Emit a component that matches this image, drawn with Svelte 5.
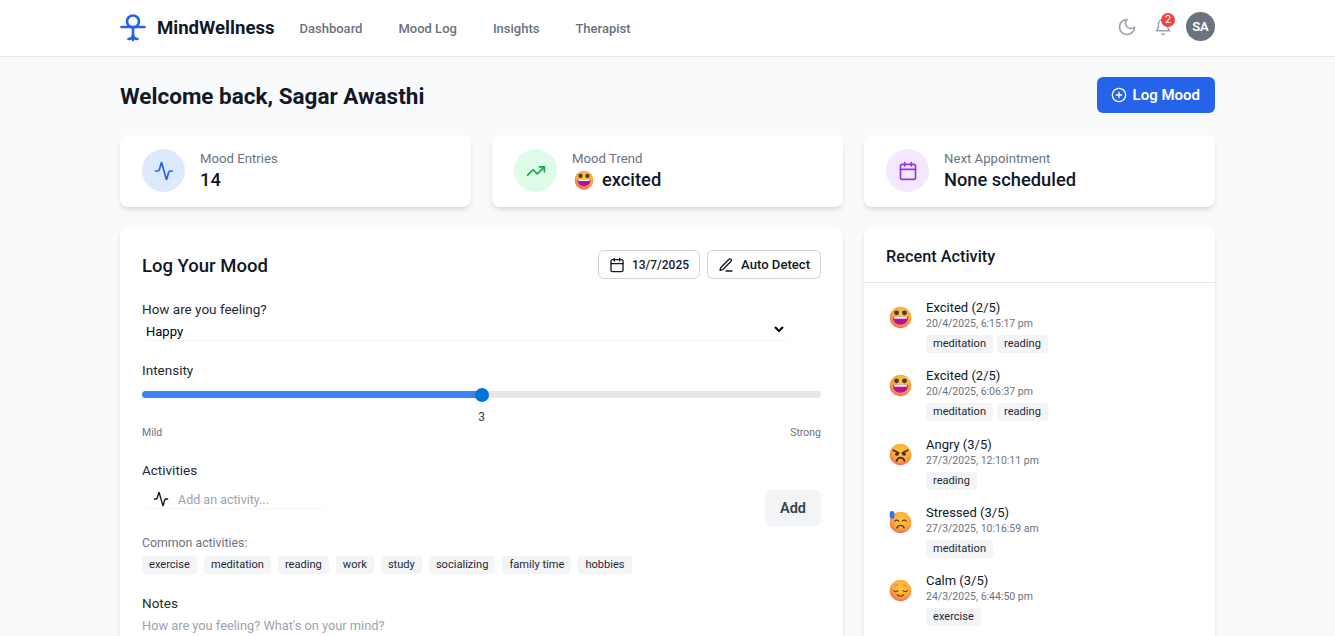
<script lang="ts">
	const navLinks = ['Dashboard', 'Mood Log', 'Insights', 'Therapist'];
	const commonActivities = ['exercise', 'meditation', 'reading', 'work', 'study', 'socializing', 'family time', 'hobbies'];
	const recent = [
		{ mood: 'excited', label: 'Excited (2/5)', time: '20/4/2025, 6:15:17 pm', tags: ['meditation', 'reading'] },
		{ mood: 'excited', label: 'Excited (2/5)', time: '20/4/2025, 6:06:37 pm', tags: ['meditation', 'reading'] },
		{ mood: 'angry', label: 'Angry (3/5)', time: '27/3/2025, 12:10:11 pm', tags: ['reading'] },
		{ mood: 'stressed', label: 'Stressed (3/5)', time: '27/3/2025, 10:16:59 am', tags: ['meditation'] },
		{ mood: 'calm', label: 'Calm (3/5)', time: '24/3/2025, 6:44:50 pm', tags: ['exercise'] }
	];
</script>

{#snippet face(mood: string, size: number)}
	<svg class="emoji" width={size} height={size} viewBox="0 0 32 32" aria-hidden="true">
		<defs>
			<radialGradient id="face-{mood}" cx="0.55" cy="0.36" r="0.72">
				<stop offset="0" stop-color="#ffc83a" />
				<stop offset="0.58" stop-color="#fba83a" />
				<stop offset="0.82" stop-color="#f6794f" />
				<stop offset="1" stop-color="#e95a8a" />
			</radialGradient>
		</defs>
		<circle cx="16" cy="16" r="15" fill="url(#face-{mood})" />
		{#if mood === 'excited'}
			<circle cx="10.500" cy="9.500" r="3.400" fill="#4a3a3f" />
			<circle cx="21.500" cy="9.500" r="3.400" fill="#4a3a3f" />
			<path d="M6.500 15h19c.6 0 1 .4 1 1 0 6-4.500 10-10.500 10S5.500 22 5.500 16c0-.6.4-1 1-1z" fill="#b8129c" />
			<path d="M7 15h18v2.600H7z" fill="#fff" />
		{:else if mood === 'angry'}
			<path d="M6 10l7.500 4M26 10l-7.500 4" stroke="#4a2a2a" stroke-width="2.400" stroke-linecap="round" fill="none" />
			<circle cx="11" cy="15.500" r="2.400" fill="#4a2a2a" />
			<circle cx="21" cy="15.500" r="2.400" fill="#4a2a2a" />
			<path d="M10.500 25c1-3.500 3.500-4.500 5.500-4.500s4.500 1 5.500 4.500" stroke="#4a2a2a" stroke-width="2.400" stroke-linecap="round" fill="none" />
		{:else if mood === 'stressed'}
			<path d="M8 14c1.500-1.800 4-1.800 5.500 0M18.500 14c1.500-1.800 4-1.800 5.500 0" stroke="#5a3a30" stroke-width="1.800" stroke-linecap="round" fill="none" />
			<path d="M11 23.500c1-2.500 3-3.500 5-3.500s4 1 5 3.500" stroke="#5a3a30" stroke-width="2" stroke-linecap="round" fill="none" />
			<rect x="1" y="0" width="6.500" height="11" rx="3.200" fill="#3f6fe0" />
		{:else}
			<path d="M6.500 16c1.500 2 4.500 2 6 0M19.500 16c1.500 2 4.500 2 6 0" stroke="#5a3a30" stroke-width="1.600" stroke-linecap="round" fill="none" />
			<path d="M7.500 10c1.500-1.500 3-1.800 4.500-1.500M24.500 10c-1.500-1.500-3-1.800-4.500-1.500" stroke="#c9803a" stroke-width="1.300" stroke-linecap="round" fill="none" />
			<path d="M11.500 22c2.500 2.400 6.500 2.400 9 0" stroke="#5a3a30" stroke-width="1.800" stroke-linecap="round" fill="none" />
		{/if}
	</svg>
{/snippet}

{#snippet calendarIcon(size: number)}
	<svg width={size} height={size} viewBox="0 0 24 24" fill="none" stroke="currentColor" stroke-width="2" stroke-linecap="round" stroke-linejoin="round" aria-hidden="true">
		<path d="M8 2v4M16 2v4" />
		<rect x="3" y="4" width="18" height="18" rx="2" />
		<path d="M3 10h18" />
	</svg>
{/snippet}

{#snippet activityIcon(size: number)}
	<svg width={size} height={size} viewBox="0 0 24 24" fill="none" stroke="currentColor" stroke-width="2" stroke-linecap="round" stroke-linejoin="round" aria-hidden="true">
		<path d="M22 12h-2.480a2 2 0 0 0-1.930 1.460l-2.350 8.360a.25.25 0 0 1-.48 0L9.240 2.180a.25.25 0 0 0-.48 0l-2.350 8.360A2 2 0 0 1 4.490 12H2" />
	</svg>
{/snippet}

<div class="page">
	<header class="topbar">
		<div class="topbar__left">
			<div class="brand">
				<svg class="brand__mark" width="26" height="28" viewBox="0 0 26 28" fill="none" stroke="#2563eb" stroke-width="2.600" stroke-linecap="round" aria-hidden="true">
					<circle cx="13" cy="7.500" r="6" />
					<path d="M1.500 13h23M13 14v7" />
					<path d="M8.500 25c2.500 0 4-1.500 4.500-4 .5 2.500 2 4 4.500 4M13 21v5" />
				</svg>
				<span class="brand__name">MindWellness</span>
			</div>
			<nav class="nav">
				{#each navLinks as link}
					<a class="nav__link" href="#top">{link}</a>
				{/each}
			</nav>
		</div>
		<div class="topbar__right">
			<svg class="moon" width="20" height="20" viewBox="0 0 24 24" fill="none" stroke="currentColor" stroke-width="2" stroke-linecap="round" stroke-linejoin="round" aria-hidden="true">
				<path d="M12 3a6 6 0 0 0 9 9 9 9 0 1 1-9-9Z" />
			</svg>
			<div class="bell">
				<svg width="18" height="18" viewBox="0 0 24 24" fill="none" stroke="currentColor" stroke-width="2" stroke-linecap="round" stroke-linejoin="round" aria-hidden="true">
					<path d="M6 8a6 6 0 0 1 12 0c0 7 3 9 3 9H3s3-2 3-9" />
					<path d="M10.300 21a1.940 1.940 0 0 0 3.400 0" />
				</svg>
				<span class="bell__badge">2</span>
			</div>
			<div class="avatar">SA</div>
		</div>
	</header>

	<main class="main">
		<div class="welcome">
			<h1 class="welcome__title">Welcome back, Sagar Awasthi</h1>
			<button type="button" class="log-btn">
				<svg width="16" height="16" viewBox="0 0 24 24" fill="none" stroke="currentColor" stroke-width="2" stroke-linecap="round" stroke-linejoin="round" aria-hidden="true">
					<circle cx="12" cy="12" r="10" />
					<path d="M8 12h8M12 8v8" />
				</svg>
				Log Mood
			</button>
		</div>

		<section class="stats">
			<div class="stat card">
				<div class="stat__icon stat__icon--blue">{@render activityIcon(20)}</div>
				<div>
					<p class="stat__label">Mood Entries</p>
					<p class="stat__value">14</p>
				</div>
			</div>
			<div class="stat card">
				<div class="stat__icon stat__icon--green">
					<svg width="20" height="20" viewBox="0 0 24 24" fill="none" stroke="currentColor" stroke-width="2" stroke-linecap="round" stroke-linejoin="round" aria-hidden="true">
						<path d="M22 7l-8.500 8.500-5-5L2 17" />
						<path d="M16 7h6v6" />
					</svg>
				</div>
				<div>
					<p class="stat__label">Mood Trend</p>
					<p class="stat__value stat__value--mood">{@render face('excited', 20)} excited</p>
				</div>
			</div>
			<div class="stat card">
				<div class="stat__icon stat__icon--purple">{@render calendarIcon(20)}</div>
				<div>
					<p class="stat__label">Next Appointment</p>
					<p class="stat__value">None scheduled</p>
				</div>
			</div>
		</section>

		<section class="columns">
			<div class="log card">
				<div class="log__head">
					<h2 class="log__title">Log Your Mood</h2>
					<div class="log__actions">
						<button type="button" class="outline-btn outline-btn--date">{@render calendarIcon(16)} 13/7/2025</button>
						<button type="button" class="outline-btn">
							<svg width="16" height="16" viewBox="0 0 24 24" fill="none" stroke="currentColor" stroke-width="2" stroke-linecap="round" stroke-linejoin="round" aria-hidden="true">
								<path d="M12 21h9" />
								<path d="M16.500 3.500a2.120 2.120 0 0 1 3 3L7 19l-4 1 1-4Z" />
							</svg>
							Auto Detect
						</button>
					</div>
				</div>

				<label class="field-label" for="mood">How are you feeling?</label>
				<select id="mood" class="mood-select">
					<option>Happy</option>
					<option>Excited</option>
					<option>Calm</option>
					<option>Stressed</option>
					<option>Angry</option>
				</select>

				<label class="field-label field-label--intensity" for="intensity">Intensity</label>
				<input id="intensity" class="slider" type="range" min="1" max="5" value="3" />
				<div class="slider-value">3</div>
				<div class="slider-ends"><span>Mild</span><span>Strong</span></div>

				<label class="field-label field-label--activities" for="activity">Activities</label>
				<div class="activity-row">
					<div class="activity-input">
						{@render activityIcon(16)}
						<input id="activity" type="text" placeholder="Add an activity..." />
					</div>
					<button type="button" class="add-btn">Add</button>
				</div>

				<p class="common-label">Common activities:</p>
				<div class="tags">
					{#each commonActivities as activity}
						<span class="tag">{activity}</span>
					{/each}
				</div>

				<label class="field-label field-label--notes" for="notes">Notes</label>
				<textarea id="notes" class="notes" rows="4" placeholder="How are you feeling? What's on your mind?"></textarea>
			</div>

			<aside class="activity card">
				<h2 class="activity__title">Recent Activity</h2>
				<ul class="activity__list">
					{#each recent as entry}
						<li class="entry">
							<div class="entry__emoji">{@render face(entry.mood, 23)}</div>
							<div>
								<p class="entry__label">{entry.label}</p>
								<p class="entry__time">{entry.time}</p>
								<div class="tags tags--entry">
									{#each entry.tags as tag}
										<span class="tag">{tag}</span>
									{/each}
								</div>
							</div>
						</li>
					{/each}
				</ul>
			</aside>
		</section>
	</main>
</div>

<style>
	:global(body) {
		margin: 0;
		overflow: hidden;
		background: #f9fafb;
		font-family: Roboto, 'Noto Sans', sans-serif;
		color: #111827;
	}

	p,
	h1,
	h2,
	ul {
		margin: 0;
		padding: 0;
	}

	.page {
		height: 636px;
		overflow: hidden;
	}

	.card {
		background: #fff;
		border-radius: 8px;
		box-shadow: 0 4px 6px -1px rgb(0 0 0 / 0.1), 0 2px 4px -2px rgb(0 0 0 / 0.1);
	}

	.topbar {
		display: flex;
		align-items: center;
		justify-content: space-between;
		height: 56px;
		padding: 0 120px;
		background: #fff;
		border-bottom: 1px solid #e5e7eb;
	}

	.topbar__left,
	.topbar__right,
	.brand,
	.nav {
		display: flex;
		align-items: center;
	}

	.topbar__right {
		padding-bottom: 3px;
	}

	.brand {
		gap: 11px;
	}

	.brand__name {
		font-size: 18.600px;
		font-weight: 700;
	}

	.nav {
		gap: 36px;
		margin-left: 25px;
	}

	.nav__link {
		font-size: 13px;
		font-weight: 500;
		color: #6b7280;
		text-decoration: none;
	}

	.moon {
		color: #9ca3af;
		margin-right: 17px;
	}

	.bell {
		position: relative;
		display: flex;
		color: #9ca3af;
		margin-right: 14px;
	}

	.bell__badge {
		position: absolute;
		top: -5px;
		right: -3px;
		width: 14px;
		height: 14px;
		border-radius: 50%;
		background: #ef4444;
		color: #fff;
		font-size: 11px;
		line-height: 14px;
		text-align: center;
	}

	.avatar {
		width: 29px;
		height: 29px;
		border-radius: 50%;
		background: #6b7280;
		color: #fff;
		font-size: 13px;
		font-weight: 600;
		line-height: 29px;
		text-align: center;
	}

	.main {
		padding: 20px 120px 0;
	}

	.welcome {
		display: flex;
		align-items: center;
		justify-content: space-between;
		margin-bottom: 22px;
	}

	.welcome__title {
		padding-top: 1px;
		margin-bottom: -1px;
		font-size: 22.500px;
		font-weight: 700;
		line-height: 36px;
	}

	.log-btn {
		display: flex;
		align-items: center;
		gap: 6px;
		height: 36px;
		padding: 0 15px 0 14px;
		border: 0;
		border-radius: 6px;
		background: #2563eb;
		color: #fff;
		font: 600 15px Roboto, sans-serif;
	}

	.stats {
		display: grid;
		grid-template-columns: repeat(3, 1fr);
		gap: 21px;
		margin-bottom: 21px;
	}

	.stat {
		display: flex;
		align-items: center;
		gap: 15px;
		height: 72px;
		padding: 0 22px;
	}

	.stat__icon {
		display: flex;
		align-items: center;
		justify-content: center;
		width: 43px;
		height: 43px;
		margin-top: -1px;
		border-radius: 50%;
	}

	.stat__icon--blue {
		background: #dbeafe;
		color: #2563eb;
	}

	.stat__icon--green {
		background: #dcfce7;
		color: #16a34a;
	}

	.stat__icon--purple {
		background: #f3e8ff;
		color: #9333ea;
	}

	.stat__label {
		padding-top: 1px;
		font-size: 13.200px;
		font-weight: 400;
		line-height: 18px;
		color: #6b7280;
	}

	.stat__value {
		margin-top: -1px;
		font-size: 18.300px;
		font-weight: 500;
		line-height: 26px;
	}

	.stat__value--mood {
		display: flex;
		align-items: center;
		gap: 8px;
		padding-left: 2px;
	}

	.columns {
		display: grid;
		grid-template-columns: 723px 351px;
		gap: 21px;
		align-items: start;
	}

	.log {
		padding: 22px;
	}

	.log__head {
		display: flex;
		align-items: center;
		justify-content: space-between;
		margin-bottom: 20px;
	}

	.log__title {
		padding-top: 2px;
		margin-bottom: -2px;
		font-size: 18.500px;
		font-weight: 500;
		line-height: 29px;
	}

	.log__actions {
		display: flex;
		gap: 7px;
	}

	.outline-btn {
		display: flex;
		align-items: center;
		gap: 7px;
		height: 29px;
		padding: 0 10px;
		background: #fff;
		border: 1px solid #d1d5db;
		border-radius: 6px;
		color: #111827;
		font: 500 13.100px Roboto, sans-serif;
	}

	.outline-btn--date {
		font-size: 12px;
	}

	.field-label {
		display: block;
		font-size: 13.500px;
		font-weight: 400;
		line-height: 20px;
		color: #1f2937;
	}

	.field-label--intensity {
		margin-top: 20px;
	}

	.field-label--activities,
	.field-label--notes {
		margin-top: 19px;
	}

	.mood-select {
		display: block;
		width: 645px;
		height: 21px;
		padding: 4px 0 0;
		border: 0;
		border-radius: 6px;
		background: #fff;
		box-shadow: 0 1px 2px rgb(0 0 0 / 0.05);
		font: 400 13px Roboto, sans-serif;
		color: #000;
	}

	.slider {
		display: block;
		width: 679px;
		height: 7px;
		margin: 11px 0 0;
		appearance: none;
		border-radius: 4px;
		background: linear-gradient(to right, #3b82f6 50%, #e5e7eb 50%);
	}

	.slider::-webkit-slider-thumb {
		appearance: none;
		width: 14px;
		height: 14px;
		border-radius: 50%;
		background: #0075d8;
	}

	.slider-value {
		margin-top: 10px;
		font-size: 12px;
		line-height: 18px;
		text-align: center;
		color: #374151;
	}

	.slider-ends {
		display: flex;
		justify-content: space-between;
		margin-top: -1px;
		font-size: 10.500px;
		line-height: 16px;
		color: #6b7280;
	}

	.activity-row {
		display: flex;
		align-items: flex-start;
		justify-content: space-between;
		margin-top: 10px;
	}

	.activity-input {
		display: flex;
		align-items: center;
		gap: 9px;
		width: 183px;
		height: 18px;
		padding-left: 11px;
		box-sizing: border-box;
		border-radius: 6px;
		box-shadow: 0 1px 2px rgb(0 0 0 / 0.05);
		color: #111827;
	}

	.activity-input input {
		width: 140px;
		padding: 0;
		border: 0;
		outline: 0;
		font: 400 12.500px Roboto, sans-serif;
	}

	.activity-input input::placeholder,
	.notes::placeholder {
		color: #9ca3af;
	}

	.add-btn {
		width: 56px;
		height: 36px;
		border: 0;
		border-radius: 6px;
		background: #f3f4f6;
		color: #374151;
		font: 600 14.500px Roboto, sans-serif;
	}

	.common-label {
		margin-top: 8px;
		font-size: 12.300px;
		line-height: 18px;
		color: #6b7280;
	}

	.tags {
		display: flex;
		flex-wrap: wrap;
		gap: 7px;
		margin-top: 4px;
	}

	.tags--entry {
		gap: 4px;
		margin-top: 4px;
	}

	.tag {
		padding: 0 7px;
		border-radius: 4px;
		background: #f3f4f6;
		color: #1f2937;
		font-size: 11.100px;
		font-weight: 400;
		line-height: 18px;
	}

	.notes {
		display: block;
		width: 100%;
		box-sizing: border-box;
		margin-top: 5px;
		padding: 0;
		border: 0;
		outline: 0;
		resize: none;
		font: 400 12.800px Roboto, sans-serif;
	}

	.activity__title {
		padding: 18px 22px 14px;
		border-bottom: 1px solid #e5e7eb;
		font-size: 16.300px;
		font-weight: 500;
		line-height: 22px;
	}

	.activity__list {
		list-style: none;
		padding: 16px 22px;
	}

	.entry {
		display: flex;
		gap: 14px;
		margin-bottom: 14.250px;
	}

	.entry__emoji {
		padding: 7px 0 0 3px;
	}

	.emoji {
		display: block;
		flex-shrink: 0;
	}

	.entry__label {
		font-size: 13px;
		font-weight: 400;
		line-height: 17px;
		color: #111827;
	}

	.entry__time {
		font-size: 10.500px;
		line-height: 15px;
		color: #6b7280;
	}
</style>
